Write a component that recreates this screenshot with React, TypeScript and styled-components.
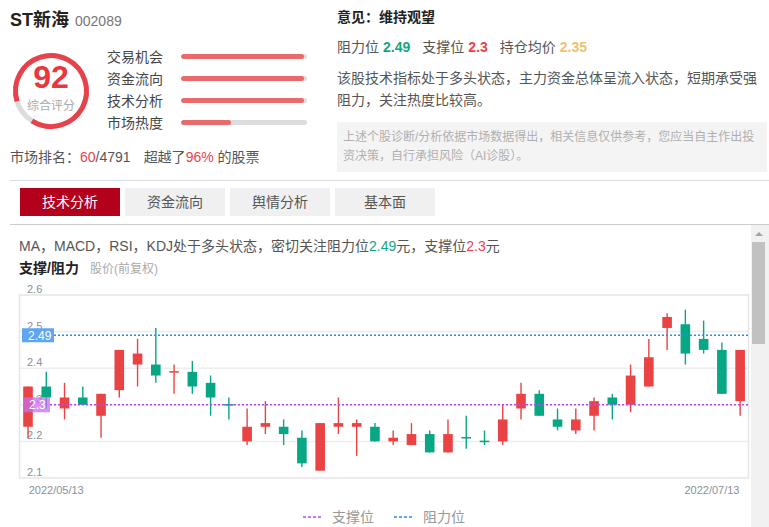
import React from "react";
import styled, { createGlobalStyle } from "styled-components";

const RED = "#ee3f4d";
const TEAL = "#14a585";
const GOLD = "#efc26c";

const GlobalStyle = createGlobalStyle`
  html, body { margin: 0; padding: 0; background: #fff; }
  body { font-family: "Liberation Sans", "Noto Sans CJK SC", sans-serif; color: #555; }
  * { box-sizing: border-box; }
`;

// [open, close, high, low]
const candles: number[][] = [
  [2.24, 2.35, 2.35, 2.21],
  [2.35, 2.32, 2.39, 2.29],
  [2.29, 2.32, 2.36, 2.26],
  [2.32, 2.3, 2.35, 2.3],
  [2.27, 2.33, 2.33, 2.21],
  [2.34, 2.45, 2.45, 2.32],
  [2.41, 2.44, 2.48, 2.35],
  [2.41, 2.38, 2.51, 2.36],
  [2.39, 2.392, 2.41, 2.33],
  [2.39, 2.35, 2.42, 2.33],
  [2.36, 2.32, 2.38, 2.27],
  [2.302, 2.298, 2.32, 2.26],
  [2.2, 2.24, 2.29, 2.19],
  [2.24, 2.25, 2.31, 2.22],
  [2.24, 2.22, 2.26, 2.19],
  [2.21, 2.14, 2.23, 2.13],
  [2.12, 2.25, 2.25, 2.12],
  [2.24, 2.25, 2.32, 2.22],
  [2.24, 2.25, 2.26, 2.16],
  [2.24, 2.2, 2.25, 2.2],
  [2.2, 2.21, 2.23, 2.19],
  [2.19, 2.22, 2.25, 2.19],
  [2.22, 2.17, 2.23, 2.17],
  [2.17, 2.22, 2.26, 2.17],
  [2.212, 2.208, 2.27, 2.18],
  [2.202, 2.198, 2.23, 2.19],
  [2.2, 2.26, 2.3, 2.19],
  [2.29, 2.33, 2.36, 2.26],
  [2.33, 2.27, 2.34, 2.27],
  [2.26, 2.24, 2.29, 2.23],
  [2.23, 2.26, 2.29, 2.22],
  [2.27, 2.31, 2.32, 2.23],
  [2.32, 2.3, 2.33, 2.26],
  [2.3, 2.38, 2.41, 2.28],
  [2.35, 2.43, 2.48, 2.35],
  [2.51, 2.54, 2.55, 2.45],
  [2.52, 2.44, 2.56, 2.41],
  [2.48, 2.45, 2.53, 2.44],
  [2.45, 2.33, 2.47, 2.33],
  [2.31, 2.45, 2.45, 2.27],
];

const scores = [
  { label: "交易机会", value: 98 },
  { label: "资金流向", value: 98 },
  { label: "技术分析", value: 98 },
  { label: "市场热度", value: 40 },
];

const tabs = ["技术分析", "资金流向", "舆情分析", "基本面"];

const Page = styled.div`
  width: 769px;
  padding-left: 10px;
`;

const TopSection = styled.div`
  display: flex;
  height: 180px;
`;

const LeftCol = styled.div`
  width: 327px;
`;

const RightCol = styled.div`
  width: 430px;
`;

const Title = styled.div`
  margin-top: 8px;
  line-height: 24px;
  display: flex;
  align-items: baseline;
`;

const StockName = styled.span`
  font-size: 18px;
  font-weight: 700;
  color: #222;
`;

const StockCode = styled.span`
  font-size: 14px;
  color: #777;
  margin-left: 6px;
`;

const ScoreRow = styled.div`
  display: flex;
  margin-top: 12px;
`;

const Bars = styled.div`
  display: flex;
  flex-direction: column;
`;

const BarRow = styled.div`
  display: flex;
  align-items: center;
  height: 22px;
`;

const BarLabel = styled.span`
  width: 74px;
  font-size: 14px;
  color: #444;
`;

const BarTrack = styled.div`
  width: 126px;
  height: 5px;
  border-radius: 3px;
  background: #dddddd;
  overflow: hidden;
`;

const BarFill = styled.div<{ $pct: number }>`
  width: ${(p) => p.$pct}%;
  height: 100%;
  border-radius: 3px;
  background: #e96a6a;
`;

const Rank = styled.div`
  margin-top: 13px;
  line-height: 22px;
  font-size: 14px;
  color: #555;
`;

const Hi = styled.span<{ $color: string }>`
  color: ${(p) => p.$color};
`;

const Spacer = styled.span`
  display: inline-block;
  width: 13px;
`;

const Opinion = styled.div`
  margin-top: 6px;
  line-height: 22px;
  font-size: 14px;
  font-weight: 700;
  color: #222;
`;

const Levels = styled.div`
  margin-top: 8px;
  line-height: 22px;
  font-size: 14px;
  color: #555;
  display: flex;
  gap: 12px;
`;

const LevelValue = styled.span<{ $color: string }>`
  color: ${(p) => p.$color};
  font-weight: 700;
  margin-left: 4px;
`;

const Para = styled.p`
  margin: 9px 0 0;
  line-height: 22px;
  font-size: 14px;
  color: #555;
`;

const Note = styled.div`
  margin-top: 11px;
  background: #f4f4f4;
  padding: 6px;
  font-size: 12px;
  line-height: 19px;
  color: #b0b0b0;
`;

const Divider = styled.div<{ $color: string }>`
  height: 1px;
  background: ${(p) => p.$color};
`;

const TabBar = styled.div`
  display: flex;
  gap: 5px;
  margin: 7px 0 8px 10px;
`;

const Tab = styled.div<{ $active?: boolean }>`
  width: 100px;
  height: 28px;
  line-height: 28px;
  text-align: center;
  font-size: 14px;
  background: ${(p) => (p.$active ? "#b3001b" : "#f0f0f0")};
  color: ${(p) => (p.$active ? "#fff" : "#555")};
`;

const ScrollArea = styled.div`
  display: flex;
  height: 302px;
  overflow: hidden;
`;

const Content = styled.div`
  flex: 1;
  min-width: 0;
`;

const Summary = styled.div`
  margin-top: 10px;
  padding-left: 9px;
  line-height: 22px;
  font-size: 14px;
  color: #555;
`;

const ChartHead = styled.div`
  padding-left: 9px;
  line-height: 22px;
`;

const ChartTitle = styled.span`
  font-size: 14px;
  font-weight: 700;
  color: #222;
`;

const ChartSub = styled.span`
  margin-left: 11px;
  font-size: 12px;
  color: #aaa;
`;

const ChartSvg = styled.svg`
  display: block;
`;

const ScrollBar = styled.div`
  width: 18px;
  flex-shrink: 0;
  background: #f1f1f1;
  display: flex;
  flex-direction: column;
`;

const ScrollArrow = styled.div`
  width: 13px;
  height: 17px;
  margin-left: 1px;
  display: flex;
  align-items: center;
  justify-content: center;
  &::before {
    content: "";
    border-left: 4px solid transparent;
    border-right: 4px solid transparent;
    border-bottom: 4px solid #a3a3a3;
  }
`;

const ScrollThumb = styled.div`
  width: 13px;
  height: 102px;
  margin-left: 1px;
  background: #c1c1c1;
`;

function Gauge({ score }: { score: number }) {
  const r = 35.5;
  const c = 2 * Math.PI * r;
  const red = c * 0.886;
  return (
    <svg width={97} height={88}>
      <circle cx={41} cy={46} r={r} fill="none" stroke="#dcdcdc" strokeWidth={5} />
      <circle
        cx={41}
        cy={46}
        r={r}
        fill="none"
        stroke="#e8414a"
        strokeWidth={5}
        strokeDasharray={`${red} ${c}`}
        transform="rotate(163 41 46)"
      />
      <text
        x={41}
        y={43}
        textAnchor="middle"
        fontSize={32}
        fontWeight={700}
        fill="#e8383d"
        fontFamily="Liberation Sans, sans-serif"
      >
        {score}
      </text>
      <text x={41} y={65} textAnchor="middle" fontSize={12} fill="#aaa" fontFamily="Noto Sans CJK SC, sans-serif">
        综合评分
      </text>
    </svg>
  );
}

const Y0 = 15;
const PX = 366;
const py = (v: number) => Y0 + (2.6 - v) * PX;
const cx = (i: number) => 18 + i * 18.26;
const AXIS = "#8a909c";
const CANDLE_UP = "#e94343";
const CANDLE_DOWN = "#07a685";

function KChart() {
  const support = 2.3;
  const resistance = 2.49;
  return (
    <ChartSvg width={741} height={260} fontFamily="Liberation Sans, sans-serif">
      {[2.5, 2.4, 2.3, 2.2].map((v) => (
        <line key={v} x1={9.5} x2={738.5} y1={py(v)} y2={py(v)} stroke="#eeeeee" strokeWidth={1.5} />
      ))}
      <rect x={9.5} y={Y0} width={729} height={183} fill="none" stroke="#e6e6e6" strokeWidth={1.5} />
      {[2.6, 2.5, 2.4, 2.3, 2.2, 2.1].map((v) => (
        <text key={v} x={17} y={py(v) - 2} fontSize={11} fill={AXIS}>
          {v.toFixed(1)}
        </text>
      ))}
      {candles.map(([o, c, h, l], i) => {
        const color = c >= o ? CANDLE_UP : CANDLE_DOWN;
        const x = cx(i);
        const top = py(Math.max(o, c));
        const bh = Math.max(py(Math.min(o, c)) - top, 1.5);
        return (
          <g key={i}>
            <line x1={x} x2={x} y1={py(h)} y2={py(l)} stroke={color} strokeWidth={1.4} />
            <rect x={x - 4.8} y={top} width={9.6} height={bh} fill={color} />
          </g>
        );
      })}
      <line x1={44} x2={739} y1={py(resistance)} y2={py(resistance)} stroke="#2b8cf3" strokeWidth={1.4} strokeDasharray="2 2" />
      <line x1={40} x2={739} y1={py(support)} y2={py(support)} stroke="#b94af2" strokeWidth={1.4} strokeDasharray="2 2" />
      <rect x={12} y={py(resistance) - 7} width={32} height={14} fill="#5ea6f5" />
      <text x={18} y={py(resistance) + 4.5} fontSize={12} fill="#fff">
        {resistance}
      </text>
      <rect x={13} y={py(support) - 7.5} width={27} height={15} fill="rgba(200, 110, 240, 0.75)" />
      <text x={19} y={py(support) + 4.5} fontSize={12} fill="#fff">
        {support}
      </text>
      <text x={18.7} y={214} fontSize={11} fill={AXIS}>
        2022/05/13
      </text>
      <text x={729.5} y={214} fontSize={11} fill={AXIS} textAnchor="end">
        2022/07/13
      </text>
      <line x1={293} x2={312} y1={237} y2={237} stroke="#b94af2" strokeWidth={1.3} strokeDasharray="3 2" />
      <text x={322} y={242} fontSize={14} fill="#999" fontFamily="Noto Sans CJK SC, sans-serif">
        支撑位
      </text>
      <line x1={384} x2={403} y1={237} y2={237} stroke="#2b8cf3" strokeWidth={1.3} strokeDasharray="3 2" />
      <text x={413} y={242} fontSize={14} fill="#999" fontFamily="Noto Sans CJK SC, sans-serif">
        阻力位
      </text>
    </ChartSvg>
  );
}

export default function App() {
  return (
    <Page>
      <GlobalStyle />
      <TopSection>
        <LeftCol>
          <Title>
            <StockName>ST新海</StockName>
            <StockCode>002089</StockCode>
          </Title>
          <ScoreRow>
            <Gauge score={92} />
            <Bars>
              {scores.map((s) => (
                <BarRow key={s.label}>
                  <BarLabel>{s.label}</BarLabel>
                  <BarTrack>
                    <BarFill $pct={s.value} />
                  </BarTrack>
                </BarRow>
              ))}
            </Bars>
          </ScoreRow>
          <Rank>
            市场排名：<Hi $color={RED}>60</Hi>/4791<Spacer />超越了<Hi $color={RED}>96%</Hi> 的股票
          </Rank>
        </LeftCol>
        <RightCol>
          <Opinion>意见：维持观望</Opinion>
          <Levels>
            <span>
              阻力位<LevelValue $color={TEAL}>2.49</LevelValue>
            </span>
            <span>
              支撑位<LevelValue $color={RED}>2.3</LevelValue>
            </span>
            <span>
              持仓均价<LevelValue $color={GOLD}>2.35</LevelValue>
            </span>
          </Levels>
          <Para>该股技术指标处于多头状态，主力资金总体呈流入状态，短期承受强阻力，关注热度比较高。</Para>
          <Note>上述个股诊断/分析依据市场数据得出，相关信息仅供参考，您应当自主作出投资决策，自行承担风险（AI诊股）。</Note>
        </RightCol>
      </TopSection>
      <Divider $color="#d6dde5" />
      <TabBar>
        {tabs.map((t, i) => (
          <Tab key={t} $active={i === 0}>
            {t}
          </Tab>
        ))}
      </TabBar>
      <Divider $color="#cccccc" />
      <ScrollArea>
        <Content>
          <Summary>
            MA，MACD，RSI，KDJ处于多头状态，密切关注阻力位<Hi $color={TEAL}>2.49</Hi>元，支撑位<Hi $color={RED}>2.3</Hi>元
          </Summary>
          <ChartHead>
            <ChartTitle>支撑/阻力</ChartTitle>
            <ChartSub>股价(前复权)</ChartSub>
          </ChartHead>
          <KChart />
        </Content>
        <ScrollBar>
          <ScrollArrow />
          <ScrollThumb />
        </ScrollBar>
      </ScrollArea>
    </Page>
  );
}
